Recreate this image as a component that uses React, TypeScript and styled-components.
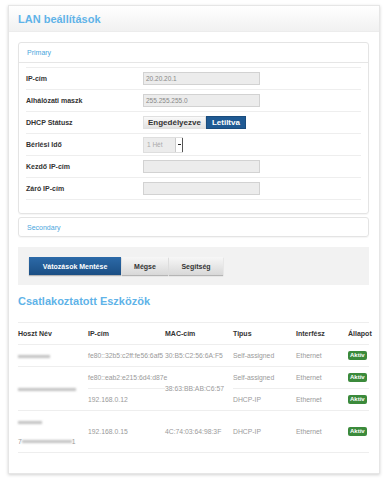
import React from "react";
import styled, { createGlobalStyle } from "styled-components";

const GlobalStyle = createGlobalStyle`
  html, body {
    margin: 0;
    padding: 0;
    background: #ffffff;
    font-family: "Liberation Sans", Arial, sans-serif;
  }
`;

const Card = styled.div`
  margin: 5px 7px 5px 8px;
  width: 370px;
  border: 1px solid #e6e6e6;
  box-shadow: 0 1px 3px rgba(0, 0, 0, 0.18);
  background: #fff;
`;

const CardHeader = styled.div`
  height: 25px;
  display: flex;
  align-items: center;
  padding-left: 9px;
  background: linear-gradient(#ffffff, #f1f1f1);
  border-bottom: 1px solid #ececec;
`;

const Title = styled.h1`
  margin: 0;
  font-size: 11px;
  font-weight: bold;
  color: #5fb3e8;
`;

const CardBody = styled.div`
  padding: 10px 10px 20px 9px;
`;

const Panel = styled.div<{ $gap?: number }>`
  border: 1px solid #e4e4e4;
  border-radius: 3px;
  box-shadow: 0 1px 1px rgba(0, 0, 0, 0.04);
  margin-top: ${({ $gap }) => $gap ?? 0}px;
`;

const PanelHeader = styled.div<{ $border?: boolean }>`
  height: ${({ $border }) => ($border ? 19 : 18)}px;
  display: flex;
  align-items: center;
  padding-left: 8px;
  font-size: 7px;
  color: #4aa6dd;
  border-bottom: ${({ $border }) => ($border ? "1px solid #e6e6e6" : "none")};
`;

const PanelContent = styled.div`
  padding: 4px 7px 13px 7px;
`;

const FormRow = styled.div<{ $first?: boolean }>`
  height: 21px;
  display: grid;
  grid-template-columns: 117px 1fr;
  align-items: center;
  border-bottom: 1px solid #eeeeee;
  border-top: ${({ $first }) => ($first ? "1px solid #eeeeee" : "none")};
`;

const Label = styled.div`
  font-size: 7px;
  font-weight: bold;
  color: #333;
`;

const TextInput = styled.div`
  width: 113px;
  height: 11px;
  background: #ececec;
  border: 1px solid #d2d2d2;
  font-size: 6.5px;
  color: #888;
  line-height: 11px;
  padding-left: 2px;
`;

const Toggle = styled.div`
  display: flex;
  height: 13px;
`;

const ToggleButton = styled.div<{ $active?: boolean }>`
  height: 13px;
  padding: 0 ${({ $active }) => ($active ? 5 : 4)}px;
  display: flex;
  align-items: center;
  font-size: 8px;
  font-weight: bold;
  color: ${({ $active }) => ($active ? "#fff" : "#333")};
  background: ${({ $active }) =>
    $active ? "#1f5a93" : "linear-gradient(#fafafa, #e2e2e2)"};
  border: 1px solid ${({ $active }) => ($active ? "#1a4c7d" : "#e0e0e0")};
  box-sizing: border-box;
`;

const Select = styled.div`
  width: 40px;
  height: 16px;
  display: flex;
  background: #ececec;
  border: 1px solid #dedede;
  box-sizing: border-box;
`;

const SelectValue = styled.div`
  flex: 1;
  font-size: 6.5px;
  color: #aaa;
  display: flex;
  align-items: center;
  padding-left: 3px;
`;

const SelectArrow = styled.div`
  width: 6px;
  background: #fff;
  border-left: 1px solid #ccc;
  box-shadow: 1px 0 0 #555;
  display: flex;
  align-items: center;
  justify-content: center;
  &::after {
    content: "";
    width: 3px;
    height: 1px;
    background: #222;
  }
`;

const ActionBar = styled.div`
  margin-top: 10px;
  height: 38px;
  background: #f2f2f2;
  display: flex;
  align-items: center;
  gap: 1px;
  padding-left: 11px;
`;

const ActionButton = styled.div<{ $primary?: boolean; $w: number }>`
  width: ${({ $w }) => $w}px;
  height: 18px;
  display: flex;
  align-items: center;
  justify-content: center;
  font-size: 7px;
  font-weight: bold;
  color: ${({ $primary }) => ($primary ? "#fff" : "#333")};
  background: ${({ $primary }) =>
    $primary
      ? "linear-gradient(#2c6aa8, #1b4f84)"
      : "linear-gradient(#f7f7f7, #d8d8d8)"};
  box-shadow: 0 1px 1px rgba(0, 0, 0, 0.25);
`;

const SectionTitle = styled.h2`
  margin: 5px 0 0 0;
  height: 22px;
  display: flex;
  align-items: center;
  font-size: 11px;
  font-weight: bold;
  color: #5fb3e8;
`;

const Table = styled.table`
  margin-top: 10px;
  width: 351px;
  border-collapse: collapse;
  border-top: 1px solid #eeeeee;
  table-layout: fixed;
`;

const Th = styled.th<{ $w: number }>`
  width: ${({ $w }) => $w}px;
  height: 21px;
  padding: 0;
  text-align: left;
  font-size: 7px;
  font-weight: bold;
  color: #333;
  border-bottom: 1px solid #eeeeee;
`;

const Td = styled.td<{ $h?: number }>`
  height: ${({ $h }) => $h ?? 21}px;
  padding: 0;
  font-size: 6.8px;
  color: #9a9a9a;
  white-space: nowrap;
  border-bottom: 1px solid #eeeeee;
  vertical-align: middle;
`;

const HostLines = styled.div`
  display: flex;
  flex-direction: column;
  gap: 12px;
`;

const Blur = styled.span<{ $w: number }>`
  display: inline-block;
  width: ${({ $w }) => $w}px;
  height: 3px;
  background: #c2c2c2;
  filter: blur(0.9px);
  vertical-align: middle;
`;

const Badge = styled.span`
  display: inline-block;
  background: #3b8a3b;
  color: #fff;
  font-size: 6px;
  font-weight: bold;
  padding: 1px 2px;
  border-radius: 2px;
  line-height: 7px;
`;

const formRows: { label: string; value: string }[] = [
  { label: "IP-cím", value: "20.20.20.1" },
  { label: "Alhálózati maszk", value: "255.255.255.0" },
];

export default function App() {
  return (
    <>
      <GlobalStyle />
      <Card>
        <CardHeader>
          <Title>LAN beállítások</Title>
        </CardHeader>
        <CardBody>
          <Panel>
            <PanelHeader $border>Primary</PanelHeader>
            <PanelContent>
              {formRows.map((r, i) => (
                <FormRow key={r.label} $first={i === 0}>
                  <Label>{r.label}</Label>
                  <TextInput>{r.value}</TextInput>
                </FormRow>
              ))}
              <FormRow>
                <Label>DHCP Státusz</Label>
                <Toggle>
                  <ToggleButton>Engedélyezve</ToggleButton>
                  <ToggleButton $active>Letiltva</ToggleButton>
                </Toggle>
              </FormRow>
              <FormRow>
                <Label>Bérlési Idő</Label>
                <Select>
                  <SelectValue>1 Hét</SelectValue>
                  <SelectArrow />
                </Select>
              </FormRow>
              <FormRow>
                <Label>Kezdő IP-cím</Label>
                <TextInput />
              </FormRow>
              <FormRow>
                <Label>Záró IP-cím</Label>
                <TextInput />
              </FormRow>
            </PanelContent>
          </Panel>
          <Panel $gap={3}>
            <PanelHeader>Secondary</PanelHeader>
          </Panel>

          <ActionBar>
            <ActionButton $primary $w={92}>Vátozások Mentése</ActionButton>
            <ActionButton $w={46}>Mégse</ActionButton>
            <ActionButton $w={54}>Segítség</ActionButton>
          </ActionBar>

          <SectionTitle>Csatlakoztatott Eszközök</SectionTitle>

          <Table>
            <thead>
              <tr>
                <Th $w={70}>Hoszt Név</Th>
                <Th $w={77}>IP-cím</Th>
                <Th $w={68}>MAC-cím</Th>
                <Th $w={63}>Tipus</Th>
                <Th $w={52}>Interfész</Th>
                <Th $w={21}>Állapot</Th>
              </tr>
            </thead>
            <tbody>
              <tr>
                <Td>
                  <Blur $w={32} />
                </Td>
                <Td>fe80::32b5:c2ff:fe56:6af5</Td>
                <Td>30:B5:C2:56:6A:F5</Td>
                <Td>Self-assigned</Td>
                <Td>Ethernet</Td>
                <Td>
                  <Badge>Aktív</Badge>
                </Td>
              </tr>
              <tr>
                <Td rowSpan={2}>
                  <Blur $w={58} />
                </Td>
                <Td>fe80::eab2:e215:6d4:d87e</Td>
                <Td rowSpan={2}>38:63:BB:AB:C6:57</Td>
                <Td>Self-assigned</Td>
                <Td>Ethernet</Td>
                <Td>
                  <Badge>Aktív</Badge>
                </Td>
              </tr>
              <tr>
                <Td>192.168.0.12</Td>
                <Td>DHCP-IP</Td>
                <Td>Ethernet</Td>
                <Td>
                  <Badge>Aktív</Badge>
                </Td>
              </tr>
              <tr>
                <Td $h={41}>
                  <HostLines>
                    <span>
                      <Blur $w={24} />
                    </span>
                    <span>
                      7<Blur $w={50} />1
                    </span>
                  </HostLines>
                </Td>
                <Td $h={41}>192.168.0.15</Td>
                <Td $h={41}>4C:74:03:64:98:3F</Td>
                <Td $h={41}>DHCP-IP</Td>
                <Td $h={41}>Ethernet</Td>
                <Td $h={41}>
                  <Badge>Aktív</Badge>
                </Td>
              </tr>
            </tbody>
          </Table>
        </CardBody>
      </Card>
    </>
  );
}
